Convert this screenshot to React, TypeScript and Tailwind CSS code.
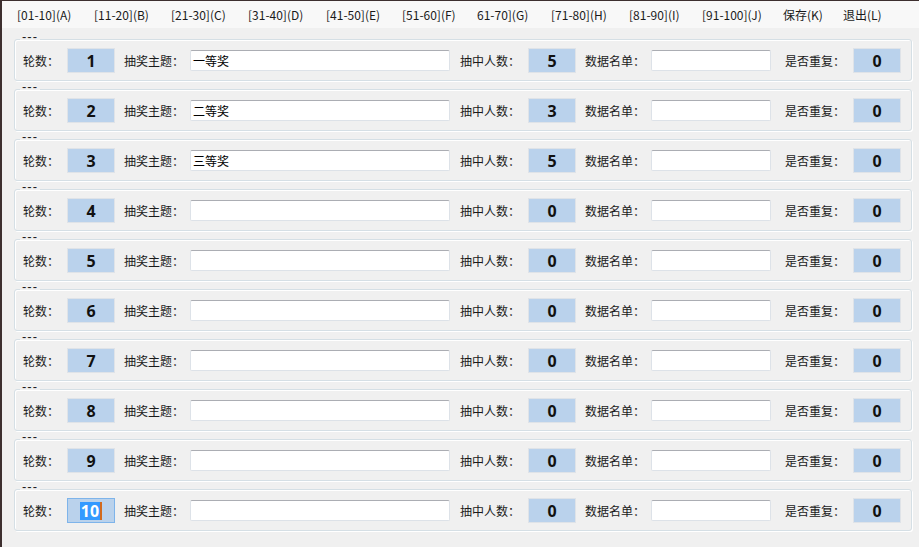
import React from "react";

const menus = [
  { t: "[01-10](A)", w: "w-[77px]" },
  { t: "[11-20](B)", w: "w-[77px]" },
  { t: "[21-30](C)", w: "w-[77px]" },
  { t: "[31-40](D)", w: "w-[78px]" },
  { t: "[41-50](E)", w: "w-[76px]" },
  { t: "[51-60](F)", w: "w-[75px]" },
  { t: "61-70](G)", w: "w-[74px]" },
  { t: "[71-80](H)", w: "w-[78px]" },
  { t: "[81-90](I)", w: "w-[73px]" },
  { t: "[91-100](J)", w: "w-[81px]" },
  { t: "保存(K)", w: "w-[60px]" },
  { t: "退出(L)", w: "w-[60px]" },
];

const rounds = [
  { n: "1", theme: "一等奖", count: "5" },
  { n: "2", theme: "二等奖", count: "3" },
  { n: "3", theme: "三等奖", count: "5" },
  { n: "4", theme: "", count: "0" },
  { n: "5", theme: "", count: "0" },
  { n: "6", theme: "", count: "0" },
  { n: "7", theme: "", count: "0" },
  { n: "8", theme: "", count: "0" },
  { n: "9", theme: "", count: "0" },
  { n: "10", theme: "", count: "0" },
];

const font = "font-['Noto_Sans_CJK_SC','Noto_Sans',sans-serif]";

function NumBox({ value, focused }: { value: string; focused?: boolean }) {
  return (
    <div
      className={`w-[48px] h-[25px] flex items-center justify-center bg-[#bad2ec] border ${
        focused ? "border-[#7eb4ea]" : "border-[#dfe3e8]"
      } font-['Noto_Sans',sans-serif] font-bold text-[16px] text-[#111]`}
    >
      {focused ? (
        <span className="flex items-center h-[18px]">
          <span className="bg-[#3399ff] text-white leading-[18px] px-[1px]">{value}</span>
          <span className="w-[2px] h-[18px] bg-[#d26a1e]" />
        </span>
      ) : (
        <span className="leading-none">{value}</span>
      )}
    </div>
  );
}

function TextBox({ width, value }: { width: string; value: string }) {
  return (
    <div
      className={`${width} h-[21px] bg-white border border-[#dde2e8] border-t-[#abadb3] rounded-[2px] flex items-center pl-[2px] text-[12px] text-black`}
    >
      {value}
    </div>
  );
}

export default function App() {
  return (
    <div
      className={`w-[919px] h-[547px] overflow-hidden bg-[#f0f0f0] border-l-2 border-t border-[#3d2f2f] flex flex-col ${font} text-[12px] text-[#1a1a1a]`}
    >
      {/* menu bar */}
      <div className="h-[27px] bg-[#f8f8f8] flex items-center pl-[15px]">
        {menus.map((m) => (
          <span key={m.t} className={`${m.w} shrink-0 leading-none`}>
            {m.t}
          </span>
        ))}
      </div>

      {/* rounds */}
      <div className="pt-[3px] pl-[12px]">
        {rounds.map((r, i) => (
          <fieldset
            key={r.n}
            className="w-[898px] h-[50px] border border-[#d5dfe5] rounded-[3px] pl-[5px] pr-0 shadow-[inset_1px_1px_0_#fff,1px_1px_0_#fff]"
          >
            <legend className="px-[2px] pb-[4px] text-[13px] leading-[12px] tracking-[1px] font-['Liberation_Sans',sans-serif]">---</legend>
            <div className="flex items-center h-[25px] pl-[3px] mt-[1px]">
              <span className="w-[44px] shrink-0">轮数：</span>
              <NumBox value={r.n} focused={i === 9} />
              <span className="w-[75px] shrink-0 pl-[9px]">抽奖主题：</span>
              <TextBox width="w-[260px]" value={r.theme} />
              <span className="w-[78px] shrink-0 pl-[10px]">抽中人数：</span>
              <NumBox value={r.count} />
              <span className="w-[75px] shrink-0 pl-[9px]">数据名单：</span>
              <TextBox width="w-[120px]" value="" />
              <span className="w-[82px] shrink-0 pl-[14px]">是否重复：</span>
              <NumBox value="0" />
            </div>
          </fieldset>
        ))}
      </div>
    </div>
  );
}
